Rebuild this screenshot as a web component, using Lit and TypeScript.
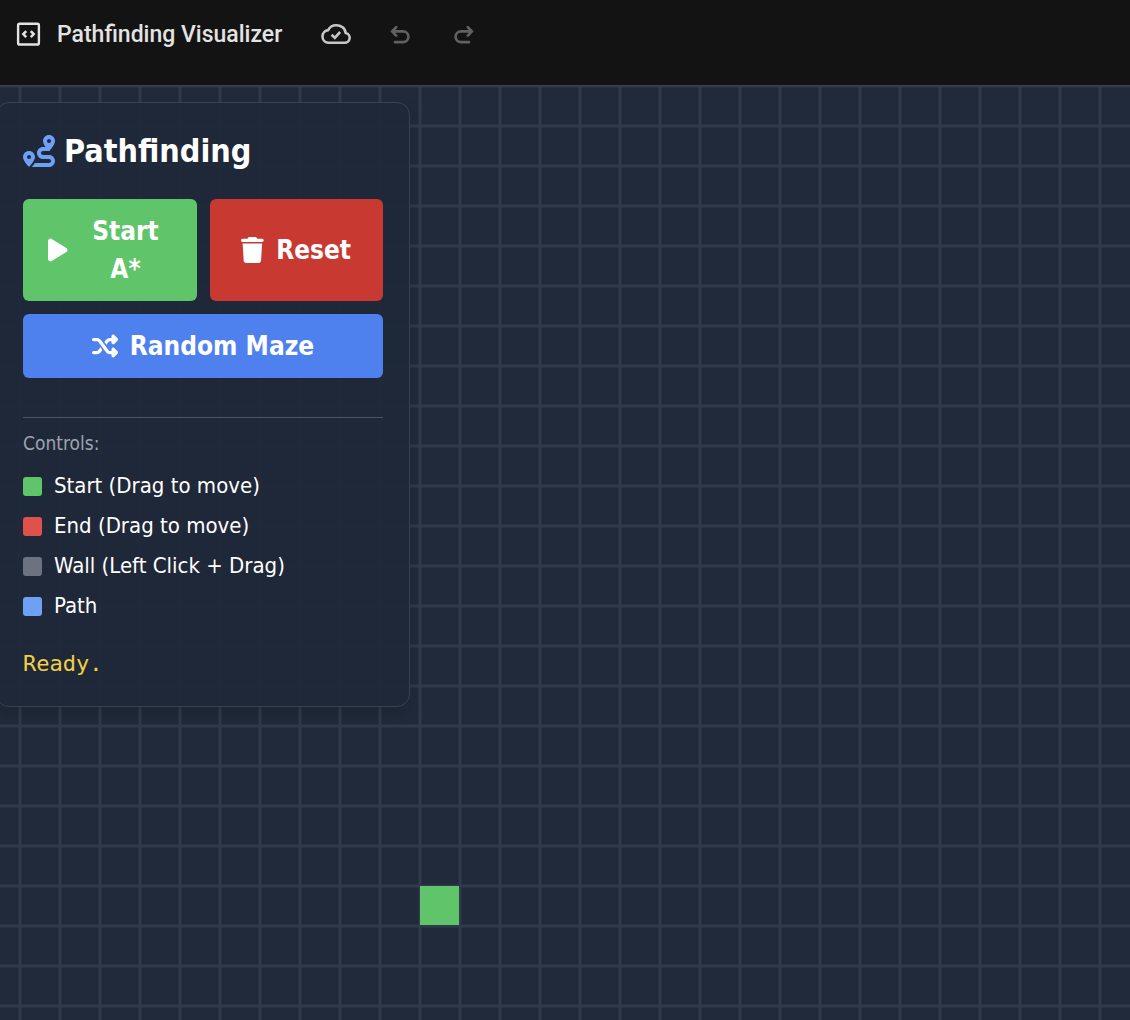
import { LitElement, html, css, svg } from "lit";
import { customElement, property } from "lit/decorators.js";

const ICONS = {
  route: {
    box: "0 0 512 512",
    d: "M512 96c0 50.2-59.1 125.1-84.6 155c-3.8 4.4-9.4 6.1-14.5 5H320c-17.7 0-32 14.3-32 32s14.3 32 32 32h96c53 0 96 43 96 96s-43 96-96 96H139.6c8.7-9.9 19.3-22.6 30-36.8c6.3-8.4 12.8-17.6 19-27.2H416c17.7 0 32-14.3 32-32s-14.3-32-32-32H320c-53 0-96-43-96-96s43-96 96-96h39.8c-21-31.5-39.8-67.7-39.8-96c0-53 43-96 96-96s96 43 96 96zM117.1 489.1c-3.8 4.3-7.2 8.1-10.1 11.3l-1.8 2-.2-.2c-6 4.6-14.6 4-20-1.8C59.8 473 0 402.5 0 352c0-53 43-96 96-96s96 43 96 96c0 30-21.1 67-43.5 97.9c-10.7 14.7-21.7 28-30.8 38.5l-.6 .7zM128 352a32 32 0 1 0 -64 0 32 32 0 1 0 64 0zM416 128a32 32 0 1 0 0-64 32 32 0 1 0 0 64z",
  },
  play: {
    box: "0 0 384 512",
    d: "M73 39c-14.8-9.1-33.4-9.4-48.5-.9S0 62.6 0 80V432c0 17.4 9.4 33.4 24.5 41.9s33.7 8.1 48.5-.9L361 297c14.3-8.7 23-24.2 23-41s-8.7-32.2-23-41L73 39z",
  },
  trash: {
    box: "0 0 448 512",
    d: "M135.2 17.7L128 32H32C14.3 32 0 46.3 0 64S14.3 96 32 96H416c17.7 0 32-14.3 32-32s-14.3-32-32-32H320l-7.2-14.3C307.4 6.8 296.3 0 284.2 0H163.8c-12.1 0-23.2 6.8-28.6 17.7zM416 128H32L53.2 467c1.6 25.3 22.6 45 47.9 45H346.9c25.3 0 46.3-19.7 47.9-45L416 128z",
  },
  shuffle: {
    box: "0 0 512 512",
    d: "M403.8 34.4c12-5 25.7-2.2 34.9 6.9l64 64c6 6 9.4 14.1 9.4 22.6s-3.4 16.6-9.4 22.6l-64 64c-9.2 9.2-22.9 11.9-34.9 6.9s-19.8-16.6-19.8-29.6V160H352c-10.1 0-19.6 4.7-25.6 12.8L284 229.3 244 176l31.2-41.6C293.3 110.2 321.8 96 352 96h32V64c0-12.9 7.8-24.6 19.8-29.6zM164 282.7L204 336l-31.2 41.6C154.7 401.8 126.2 416 96 416H32c-17.7 0-32-14.3-32-32s14.3-32 32-32H96c10.1 0 19.6-4.7 25.6-12.8L164 282.7zm274.6 188c-9.2 9.2-22.9 11.9-34.9 6.9s-19.8-16.6-19.8-29.6V416H352c-30.2 0-58.7-14.2-76.8-38.4L121.6 172.8c-6-8.1-15.5-12.8-25.6-12.8H32c-17.7 0-32-14.3-32-32s14.3-32 32-32H96c30.2 0 58.7 14.2 76.8 38.4L326.4 339.2c6 8.1 15.5 12.8 25.6 12.8h32V320c0-12.9 7.8-24.6 19.8-29.6s25.7-2.2 34.9 6.9l64 64c6 6 9.4 14.1 9.4 22.6s-3.4 16.6-9.4 22.6l-64 64z",
  },
};

type IconName = keyof typeof ICONS;

@customElement("solid-icon")
export class SolidIcon extends LitElement {
  @property() name: IconName = "play";

  static styles = css`
    :host {
      display: block;
      flex: none;
      height: 26px;
    }
    .glyph {
      display: block;
      height: 100%;
      fill: currentColor;
    }
  `;

  render() {
    const icon = ICONS[this.name];
    return html`<svg class="glyph" viewBox=${icon.box} aria-hidden="true">
      ${svg`<path d=${icon.d}></path>`}
    </svg>`;
  }
}

@customElement("top-bar")
export class TopBar extends LitElement {
  static styles = css`
    :host {
      display: block;
      background: #131313;
      border-bottom: 1px solid #3e4043;
    }
    .bar {
      display: flex;
      align-items: flex-start;
      height: 69px;
      padding: 16px 12px 0;
    }
    .line {
      display: block;
      fill: none;
      stroke: currentColor;
      stroke-linecap: round;
      stroke-linejoin: round;
    }
    .code {
      margin-top: 2px;
      color: #e3e3e3;
    }
    .title {
      margin: 0 32px 0 13px;
      font: 500 23px/38px Roboto, sans-serif;
      color: #e3e3e3;
    }
    .tool {
      width: 44px;
      height: 36px;
      padding: 0;
      border: 0;
      background: none;
      color: #c4c7c5;
      display: flex;
      align-items: center;
      justify-content: center;
    }
    .actions {
      display: flex;
      gap: 20px;
    }
    .tool:disabled {
      color: #5f6062;
    }
  `;

  render() {
    return html`<header class="bar">
      <svg class="line code" width="32" height="32" viewBox="0 0 32 32" stroke-width="2.4" aria-hidden="true">
        <rect x="6.1" y="5.7" width="20.8" height="20.8" rx="1.6"></rect>
        <path stroke-width="2.5" stroke-linecap="butt" stroke-linejoin="miter" d="M14.2 13.1l-2.9 3 2.9 3M18.8 13.1l2.9 3-2.9 3"></path>
      </svg>
      <h2 class="title">Pathfinding Visualizer</h2>
      <div class="actions">
        <button class="tool" aria-label="Saved">
          <svg class="line" width="30" height="22" viewBox="0 0 30 22" stroke-width="2.6">
            <path d="M7 19.8H23.6a4.9 4.9 0 0 0 1.1-9.7C24.3 5 20 2.2 15.2 2.2c-3.7 0-6.6 1.8-8 4.9A6.4 6.4 0 0 0 7 19.8z"></path>
            <path d="M10.6 11.8l3.2 3 5.3-5.8" stroke-linecap="butt" stroke-linejoin="miter"></path>
          </svg>
        </button>
        <button class="tool" aria-label="Undo" disabled>
          <svg class="line" width="22" height="20" viewBox="0 0 22 20" stroke-width="2.7">
            <path d="M7.2 3.2L3 7.4l4.2 4.2M3.4 7.4H14a5.4 5.4 0 0 1 0 10.8H6"></path>
          </svg>
        </button>
        <button class="tool" aria-label="Redo" disabled>
          <svg class="line" width="22" height="20" viewBox="0 0 22 20" stroke-width="2.7">
            <path d="M14.8 3.2L19 7.4l-4.2 4.2M18.6 7.4H8a5.4 5.4 0 0 0 0 10.8H16"></path>
          </svg>
        </button>
      </div>
    </header>`;
  }
}

const LEGEND = [
  { kind: "start", label: "Start (Drag to move)" },
  { kind: "end", label: "End (Drag to move)" },
  { kind: "wall", label: "Wall (Left Click + Drag)" },
  { kind: "path", label: "Path" },
];

@customElement("control-panel")
export class ControlPanel extends LitElement {
  static styles = css`
    :host {
      display: block;
      box-sizing: border-box;
      padding: 26px;
      border: 1px solid #374151;
      border-radius: 13px;
      background: rgba(32, 41, 57, 0.98);
      box-shadow: 0 8px 16px rgba(0, 0, 0, 0.12);
      font-family: "DejaVu Sans Condensed", "DejaVu Sans", sans-serif;
      color: #fff;
    }
    .heading {
      display: flex;
      align-items: center;
      gap: 9px;
      margin: 0 0 26px;
      font-size: 32px;
      line-height: 44px;
      font-weight: 700;
    }
    .mark {
      height: 32px;
      color: #6ea1f5;
    }
    .buttons {
      display: grid;
      grid-template-columns: 1fr 1fr;
      gap: 13px;
    }
    .btn {
      display: flex;
      align-items: center;
      justify-content: center;
      gap: 12px;
      padding: 13px 25px;
      border: 0;
      border-radius: 6px;
      font: inherit;
      font-size: 26px;
      line-height: 38px;
      font-weight: 700;
      color: #fff;
      cursor: pointer;
    }
    .go {
      background: #5fc46a;
    }
    .reset {
      background: #c83a31;
    }
    .maze {
      grid-column: 1 / -1;
      background: #4f81ee;
    }
    .legend {
      margin-top: 39px;
      padding-top: 12px;
      border-top: 1px solid #4b5563;
    }
    .caption {
      margin: 0 0 14px;
      font-size: 19px;
      line-height: 26px;
      color: #9ca3af;
    }
    .items {
      display: grid;
      gap: 8px;
      margin: 0;
      padding: 0;
      list-style: none;
    }
    .item {
      display: flex;
      align-items: center;
      gap: 12px;
      font-size: 22px;
      line-height: 32px;
    }
    .swatch {
      width: 19px;
      height: 19px;
      border-radius: 3px;
    }
    .start {
      background: #5fc46a;
    }
    .end {
      background: #de524c;
    }
    .wall {
      background: #6c727f;
    }
    .path {
      background: #6ea1f5;
    }
    .status {
      margin: 26px 0 0;
      font: 22px/32px "DejaVu Sans Mono", monospace;
      color: #f2cf45;
    }
  `;

  render() {
    return html`
      <h1 class="heading"><solid-icon class="mark" name="route"></solid-icon>Pathfinding</h1>
      <div class="buttons">
        <button class="btn go"><solid-icon name="play"></solid-icon><span>Start A*</span></button>
        <button class="btn reset"><solid-icon name="trash"></solid-icon><span>Reset</span></button>
        <button class="btn maze"><solid-icon name="shuffle"></solid-icon><span>Random Maze</span></button>
      </div>
      <section class="legend">
        <p class="caption">Controls:</p>
        <ul class="items">
          ${LEGEND.map((l) => html`<li class="item"><span class="swatch ${l.kind}"></span>${l.label}</li>`)}
        </ul>
      </section>
      <p class="status" role="status">Ready.</p>
    `;
  }
}

const CELL = 40;

@customElement("path-grid")
export class PathGrid extends LitElement {
  @property({ type: Number }) col = 10;
  @property({ type: Number }) row = 20;

  static styles = css`
    :host {
      display: block;
      overflow: hidden;
      background: #202a3a;
    }
    .board {
      display: block;
      width: 100%;
      height: 100%;
    }
    .rule {
      fill: none;
      stroke: #303a4a;
      stroke-width: 3;
    }
    .node {
      fill: #5fc46a;
    }
  `;

  render() {
    return html`<svg class="board" role="img" aria-label="Grid">
      <defs>
        <pattern id="cells" x="0" y="-20" width=${CELL} height=${CELL} patternUnits="userSpaceOnUse">
          <path class="rule" d="M20 0V40M0 20H40"></path>
        </pattern>
      </defs>
      <rect width="100%" height="100%" fill="url(#cells)"></rect>
      <rect class="node" x=${this.col * CELL + 20} y=${this.row * CELL} width="39" height="39"></rect>
    </svg>`;
  }
}

@customElement("app-root")
export class AppRoot extends LitElement {
  static styles = css`
    :host {
      display: flex;
      flex-direction: column;
      min-height: 100vh;
    }
    .stage {
      flex: 1;
      display: grid;
      position: relative;
      overflow: hidden;
    }
    .panel {
      position: absolute;
      top: 16px;
      left: -4px;
      width: 414px;
    }
  `;

  render() {
    return html`
      <top-bar></top-bar>
      <main class="stage">
        <path-grid></path-grid>
        <control-panel class="panel"></control-panel>
      </main>
    `;
  }
}
